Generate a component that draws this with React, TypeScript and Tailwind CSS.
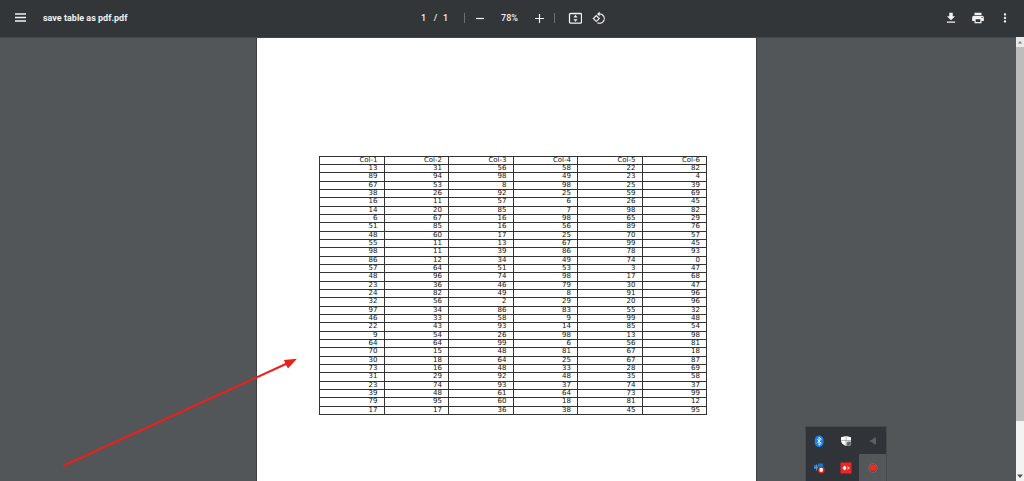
import React from "react";

const columns = ["Col-1", "Col-2", "Col-3", "Col-4", "Col-5", "Col-6"];

const rows = [
  [13, 31, 56, 58, 22, 82],
  [89, 94, 98, 49, 23, 4],
  [67, 53, 8, 98, 25, 39],
  [38, 26, 92, 25, 59, 69],
  [16, 11, 57, 6, 26, 45],
  [14, 20, 85, 7, 98, 82],
  [6, 67, 16, 98, 65, 29],
  [51, 85, 16, 56, 89, 76],
  [48, 60, 17, 25, 70, 57],
  [55, 11, 13, 67, 99, 45],
  [98, 11, 39, 86, 78, 93],
  [86, 12, 34, 49, 74, 0],
  [57, 64, 51, 53, 3, 47],
  [48, 96, 74, 98, 17, 68],
  [23, 36, 46, 79, 30, 47],
  [24, 82, 49, 8, 91, 96],
  [32, 56, 2, 29, 20, 96],
  [97, 34, 86, 83, 55, 32],
  [46, 33, 58, 9, 99, 48],
  [22, 43, 93, 14, 85, 54],
  [9, 54, 26, 98, 13, 98],
  [64, 64, 99, 6, 56, 81],
  [70, 15, 48, 81, 67, 18],
  [30, 18, 64, 25, 67, 87],
  [73, 16, 48, 33, 28, 69],
  [31, 29, 92, 48, 35, 58],
  [23, 74, 93, 37, 74, 37],
  [39, 48, 61, 64, 73, 99],
  [79, 95, 60, 18, 81, 12],
  [17, 17, 36, 38, 45, 95],
];

function IconButton({ label, className = "", children }: { label: string; className?: string; children: React.ReactNode }) {
  return (
    <button type="button" aria-label={label} className={`shrink-0 ${className}`}>
      {children}
    </button>
  );
}

function MaterialIcon({ d }: { d: string }) {
  return (
    <svg viewBox="0 0 24 24" className="size-3.5" fill="currentColor" aria-hidden="true">
      <path d={d} />
    </svg>
  );
}

function Toolbar() {
  return (
    <header className="grid h-[37px] shrink-0 grid-cols-[1fr_auto_1fr] items-center bg-[#323639] pt-px pr-3 pb-[3px] pl-3.5 text-[#f1f1f1]">
      <div className="flex items-center gap-4">
        <IconButton label="Menu">
          <svg viewBox="0 0 13 13" className="size-[13px]" aria-hidden="true">
            <path d="M1 3h11M1 6.5h11M1 10h11" stroke="currentColor" strokeWidth="1.6" />
          </svg>
        </IconButton>
        <h1 className="text-[9px] leading-3 font-bold whitespace-nowrap">save table as pdf.pdf</h1>
      </div>
      <div className="mr-px flex items-center text-[9px] leading-3 font-medium">
        <input aria-label="Page number" defaultValue="1" className="w-2 text-center" />
        <span className="ml-1 w-2 text-center">/</span>
        <span className="ml-0.5 w-2 text-center">1</span>
        <span className="ml-3.5 h-2.5 w-px bg-[#6c7073]" />
        <IconButton label="Zoom out" className="ml-[9px]">
          <svg viewBox="0 0 12 12" className="size-3" aria-hidden="true">
            <path d="M2 6.5h8" stroke="currentColor" strokeWidth="1.2" />
          </svg>
        </IconButton>
        <input aria-label="Zoom level" defaultValue="78%" className="ml-3 w-6 text-center" />
        <IconButton label="Zoom in" className="ml-[11px]">
          <svg viewBox="0 0 12 12" className="size-3" aria-hidden="true">
            <path d="M2 6.5h9M6.5 2v9" stroke="currentColor" strokeWidth="1.2" />
          </svg>
        </IconButton>
        <span className="ml-[9px] h-2.5 w-px bg-[#6c7073]" />
        <IconButton label="Fit to page" className="ml-[13px]">
          <svg viewBox="0 0 14 14" className="size-3.5" fill="none" aria-hidden="true">
            <rect x="1.5" y="2.5" width="12" height="9.6" rx="1" stroke="currentColor" strokeWidth="1.3" />
            <path d="M7.5 3.8 5.4 6.4h4.2zM7.5 10.8 5.4 8.2h4.2z" fill="currentColor" />
          </svg>
        </IconButton>
        <IconButton label="Rotate counterclockwise" className="ml-2.5">
          <MaterialIcon d="M7.34 6.41.86 12.9l6.49 6.48 6.49-6.48-6.5-6.49zM3.69 12.9l3.66-3.66L11 12.9l-3.66 3.66-3.65-3.66zm15.67-6.26A8.95 8.95 0 0 0 13 4V.76L8.76 5 13 9.24V6c1.79 0 3.58.68 4.95 2.05a7.007 7.007 0 0 1 0 9.9 6.973 6.973 0 0 1-7.79 1.44l-1.49 1.49C10.02 21.62 11.51 22 13 22c2.3 0 4.61-.88 6.36-2.64a8.98 8.98 0 0 0 0-12.72z" />
        </IconButton>
      </div>
      <div className="flex items-center justify-end gap-[13px]">
        <IconButton label="Download">
          <MaterialIcon d="M19 9h-4V3H9v6H5l7 7 7-7zM5 18v2h14v-2H5z" />
        </IconButton>
        <IconButton label="Print">
          <MaterialIcon d="M19 8H5c-1.66 0-3 1.34-3 3v6h4v4h12v-4h4v-6c0-1.66-1.34-3-3-3zm-3 11H8v-5h8v5zm3-7c-.55 0-1-.45-1-1s.45-1 1-1 1 .45 1 1-.45 1-1 1zm-1-9H6v4h12V3z" />
        </IconButton>
        <IconButton label="More actions">
          <MaterialIcon d="M12 8c1.1 0 2-.9 2-2s-.9-2-2-2-2 .9-2 2 .9 2 2 2zm0 2c-1.1 0-2 .9-2 2s.9 2 2 2 2-.9 2-2-.9-2-2-2zm0 6c-1.1 0-2 .9-2 2s.9 2 2 2 2-.9 2-2-.9-2-2-2z" />
        </IconButton>
      </div>
    </header>
  );
}

function DataTable() {
  return (
    <table className="h-[259px] w-full table-fixed border-collapse text-right font-['DejaVu_Sans',sans-serif] text-[7px] leading-[7px] text-[#111]">
      <thead>
        <tr>
          {columns.map((name) => (
            <th key={name} scope="col" className="border border-[#333] py-0 pr-1.5 pl-0 font-normal">
              {name}
            </th>
          ))}
        </tr>
      </thead>
      <tbody>
        {rows.map((row, r) => (
          <tr key={r}>
            {row.map((value, c) => (
              <td key={c} className="border border-[#333] py-0 pr-1.5 pl-0">
                {value}
              </td>
            ))}
          </tr>
        ))}
      </tbody>
    </table>
  );
}

function Scrollbar() {
  return (
    <div className="flex w-2 shrink-0 flex-col bg-[#f3f3f3]" aria-hidden="true">
      <div className="flex h-2.5 items-center justify-center bg-[#e9e9e9]">
        <svg viewBox="0 0 6 4" className="h-1 w-1.5">
          <path d="M1 3.5 3 1l2 2.5z" fill="#777" />
        </svg>
      </div>
      <div className="flex-[375] bg-[#bdbdbd]" />
      <div className="flex-[50]" />
      <div className="flex h-2.5 items-center justify-center">
        <svg viewBox="0 0 6 4" className="h-1 w-1.5">
          <path d="M0 .5h6L3 4z" fill="#505050" />
        </svg>
      </div>
    </div>
  );
}

function Arrow() {
  return (
    <svg viewBox="0 0 240 112" className="pointer-events-none absolute bottom-3 left-[60px] h-28 w-60" aria-hidden="true">
      <path d="M4 108.5 228 6" stroke="#ed1f1b" strokeWidth="2" strokeLinecap="round" />
      <path d="M237 1.8 224 3l1.4 4 2.6 4.5z" fill="#ed1f1b" />
    </svg>
  );
}

function Tray() {
  const cell = "grid place-items-center";
  return (
    <div className="absolute right-[138px] bottom-0 grid h-[54px] w-20 grid-cols-3 grid-rows-2 bg-[#303438] ring-1 ring-[#44494c]">
      <button type="button" aria-label="Bluetooth" className={cell}>
        <svg viewBox="0 0 12 14" className="h-3.5 w-3">
          <rect x="1.7" y="1.5" width="8.8" height="11.5" rx="4.4" fill="#1683ee" />
          <path d="m4.2 5.2 4 4-2.1 2V3.2l2.1 2-4 4" fill="none" stroke="#fff" strokeWidth=".9" />
        </svg>
      </button>
      <button type="button" aria-label="Windows Security" className={cell}>
        <svg viewBox="0 0 12 12" className="size-3">
          <path d="M1 2.3 6 1l5 1.3v3.2c0 2.7-2.2 4.3-5 5.5-2.8-1.2-5-2.8-5-5.5z" fill="#fff" />
          <path d="M6 1v10M1 5.5h10" stroke="#6b6f72" strokeWidth=".5" />
          <circle cx="8.8" cy="8.7" r="2.5" fill="#777b7e" />
          <path d="m7.5 9.8 2.5-2.3" stroke="#34383b" strokeWidth=".8" />
        </svg>
      </button>
      <button type="button" aria-label="Audio device" className={cell}>
        <svg viewBox="0 0 12 12" className="size-3">
          <path d="M2 6 5.5 4.4 7 2.8h2v6.4H7L5.5 7.6z" fill="#5c6063" />
        </svg>
      </button>
      <button type="button" aria-label="Network" className={cell}>
        <svg viewBox="0 0 14 12" className="h-3 w-3.5">
          <path d="M2 3h3.5v4H2zM6 1.5h5v3.5H6z" fill="#1479c9" />
          <path d="M4.5 2.5v6M2 5.5h4" stroke="#7aa2bc" strokeWidth=".8" />
          <circle cx="9.3" cy="7.9" r="3.4" fill="#d32927" />
          <rect x="7.6" y="6" width="3.2" height="3.8" rx=".8" fill="#fff" />
        </svg>
      </button>
      <button type="button" aria-label="Remote desktop" className={cell}>
        <svg viewBox="0 0 12 12" className="size-3">
          <path d="M.5.5h11v11H.5z" fill="#ef2424" />
          <path d="M4.8 3.6 6.6 6 4.8 8.4 2.4 6zM7.2 3.9 9.6 6 7.2 8.1 8 6z" fill="#fff" />
        </svg>
      </button>
      <button type="button" aria-label="Screen recorder" className={`${cell} bg-[#53575a]`}>
        <svg viewBox="0 0 12 12" className="size-3">
          <circle cx="6" cy="6" r="4.3" fill="#47433f" stroke="#74787b" strokeWidth=".8" />
          <ellipse cx="6" cy="5.7" rx="3.8" ry="3.1" fill="#f02a25" />
        </svg>
      </button>
    </div>
  );
}

export default function App() {
  return (
    <div className="relative flex h-screen flex-col overflow-hidden bg-[#525659] font-['Roboto',sans-serif]">
      <Toolbar />
      <div className="flex min-h-0 flex-1">
        <main className="flex min-w-0 flex-1 justify-center overflow-hidden border-t border-[#414548] pr-[3px]">
          <article className="w-[499px] shrink-0 self-stretch bg-white pt-[118px] pr-[49px] pl-[62px] ring-1 ring-[#3b3f42]">
            <DataTable />
          </article>
        </main>
        <Scrollbar />
      </div>
      <Arrow />
      <Tray />
    </div>
  );
}
